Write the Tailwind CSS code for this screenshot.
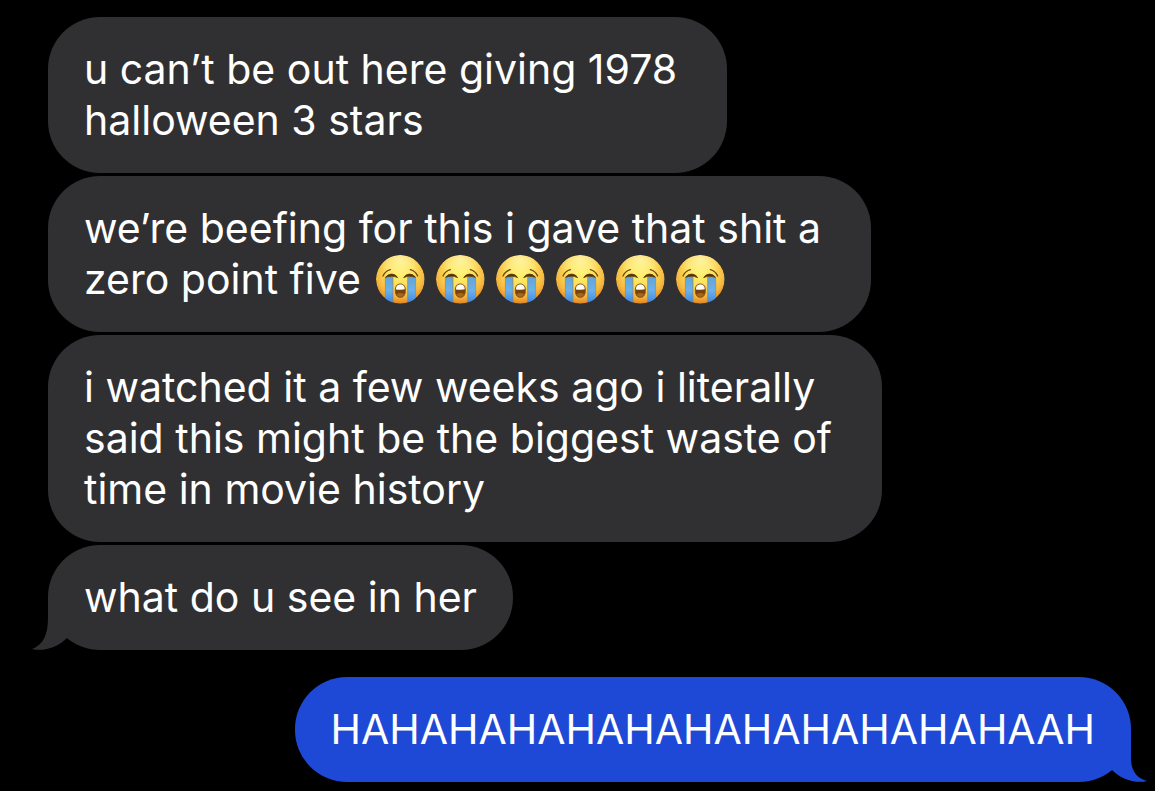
<!DOCTYPE html>
<html lang="en">
<head>
<meta charset="utf-8">
<meta name="viewport" content="width=device-width, initial-scale=1">
<title>Messages</title>
<script src="https://cdn.jsdelivr.net/npm/@tailwindcss/browser@4"></script>
</head>
<body class="bg-black font-[Inter,sans-serif] text-[41px] leading-[51px] text-white">
<svg class="absolute size-0" aria-hidden="true">
  <defs>
    <radialGradient id="face" cx="0.5" cy="0.36" r="0.66">
      <stop offset="0" stop-color="#fff15c"/>
      <stop offset="0.4" stop-color="#fde05a"/>
      <stop offset="0.75" stop-color="#f6b73f"/>
      <stop offset="1" stop-color="#dd7f20"/>
    </radialGradient>
    <radialGradient id="shine" cx="0.5" cy="0.1" r="0.45">
      <stop offset="0" stop-color="#fff6b0" stop-opacity="0.8"/>
      <stop offset="1" stop-color="#fff6b0" stop-opacity="0"/>
    </radialGradient>
    <linearGradient id="tear" x1="0" y1="0" x2="0" y2="1">
      <stop offset="0" stop-color="#62a4d8"/>
      <stop offset="0.5" stop-color="#6db1ea"/>
      <stop offset="1" stop-color="#2f7fe4"/>
    </linearGradient>
    <clipPath id="round"><circle cx="73" cy="73" r="73"/></clipPath>
    <clipPath id="lips"><path d="M73 87C83 87 88 94 88 106C88 119 83 127 73 127C63 127 58 119 58 106C58 94 63 87 73 87Z"/></clipPath>
    <symbol id="sob" viewBox="0 0 147 147">
      <g clip-path="url(#round)">
        <circle cx="73" cy="73" r="73" fill="url(#face)"/>
        <circle cx="73" cy="73" r="73" fill="url(#shine)"/>
        <path d="M28 66Q39 61 51 67V150H28Z" fill="url(#tear)" stroke="#a9813c" stroke-width="2"/>
        <path d="M95 67Q107 61 119 66V150H95Z" fill="url(#tear)" stroke="#a9813c" stroke-width="2"/>
      </g>
      <path d="M21 63Q28 48 43 44M103 44Q118 48 125 63" fill="none" stroke="#70480c" stroke-width="4" stroke-linecap="round"/>
      <path d="M29 67Q35 57 47 57Q59 57 65 68Q56 64 47 64Q38 64 29 67ZM83 68Q89 57 101 57Q112 57 118 67Q110 64 101 64Q92 64 83 68Z" fill="#553507" stroke="#553507" stroke-width="2" stroke-linejoin="round"/>
      <g clip-path="url(#lips)">
        <path d="M55 85H91V130H55Z" fill="#7b4309"/>
        <path d="M55 85H91V102Q73 106 55 102Z" fill="#fffdf5"/>
        <ellipse cx="73" cy="123" rx="12" ry="9" fill="#a4661c"/>
      </g>
      <path d="M73 87C83 87 88 94 88 106C88 119 83 127 73 127C63 127 58 119 58 106C58 94 63 87 73 87Z" fill="none" stroke="#805014" stroke-width="3"/>
    </symbol>
  </defs>
</svg>
<main class="flex flex-col gap-[27px] pt-[17px] pr-6 pb-[9px] pl-12">
  <section class="flex flex-col items-start gap-[3px]" aria-label="Received messages">
    <p class="rounded-[52px] bg-[#303032] py-[27px] pr-[50px] pl-9">u can’t be out here giving 1978<br>halloween 3 stars</p>
    <div class="rounded-[52px] bg-[#303032] py-[27px] pr-[50px] pl-9">
      <p>we’re beefing for this i gave that shit a</p>
      <p class="flex items-center gap-[15px]">zero point five
        <span class="flex gap-[11px]" role="img" aria-label="six loudly crying faces">
          <svg class="size-[49px]"><use href="#sob"/></svg>
          <svg class="size-[49px]"><use href="#sob"/></svg>
          <svg class="size-[49px]"><use href="#sob"/></svg>
          <svg class="size-[49px]"><use href="#sob"/></svg>
          <svg class="size-[49px]"><use href="#sob"/></svg>
          <svg class="size-[49px]"><use href="#sob"/></svg>
        </span>
      </p>
    </div>
    <p class="rounded-[52px] bg-[#303032] py-[27px] pr-[50px] pl-9">i watched it a few weeks ago i literally<br>said this might be the biggest waste of<br>time in movie history</p>
    <div class="relative rounded-[52px] bg-[#303032] px-9 py-[27px]">
      <svg class="absolute bottom-0 -left-4 h-[52px] w-9" viewBox="0 0 36 52" fill="#303032" aria-hidden="true"><path d="M16 0V20C16 37 11 47 0 51C12 54 26 49 35 40L36 0Z"/></svg>
      <p class="relative">what do u see in her</p>
    </div>
  </section>
  <section class="flex flex-col items-end" aria-label="Sent messages">
    <div class="relative rounded-[52px] bg-[#1d49d6] px-9 py-[27px]">
      <svg class="absolute -right-4 bottom-0 h-[52px] w-9" viewBox="0 0 36 52" fill="#1d49d6" aria-hidden="true"><path d="M20 0V28C20 40 25 48 36 51C24 54 10 49 1 40L0 0Z"/></svg>
      <p class="relative">HAHAHAHAHAHAHAHAHAHAHAHAAH</p>
    </div>
  </section>
</main>
</body>
</html>
